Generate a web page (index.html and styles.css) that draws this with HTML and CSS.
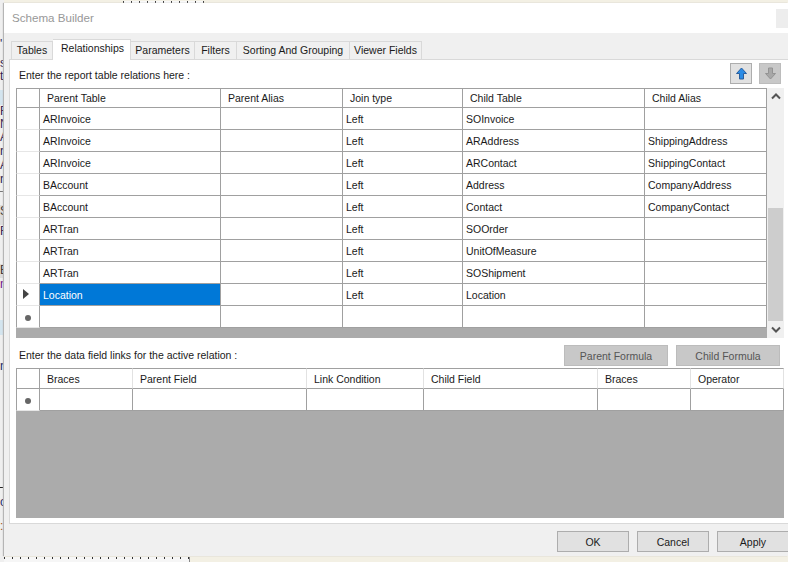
FILE: index.html
```html
<!DOCTYPE html>
<html lang="en">
<head>
<meta charset="utf-8">
<title>Schema Builder</title>
<link rel="stylesheet" href="styles.css">
</head>
<body>
<div class="screen">
  <div class="backdrop-strip">
    <span></span><span>'</span><span>s</span><span>t</span><span class="tint"></span>
    <span>F</span><span>N</span><span>A</span><span>r</span><span>A</span><span>r</span><span class="rule"></span>
    <span class="shade">S</span><span>F</span><span></span><span class="shade">E</span><span class="purple">n</span><span></span>
    <span class="tint"></span><span></span><span class="navy">r</span><span></span><span class="rule-dark"></span><span class="navy">c</span><span class="rust">:</span><span></span>
  </div>
  <div class="backdrop-top"></div>
  <div class="backdrop-bottom"></div>

  <section class="dialog">
    <header class="titlebar">
      <h1 class="title">Schema Builder</h1>
      <span class="close"></span>
    </header>

    <nav class="tabs">
      <span class="tab tab-tables">Tables</span>
      <span class="tab tab-active">Relationships</span>
      <span class="tab tab-parameters">Parameters</span>
      <span class="tab tab-filters">Filters</span>
      <span class="tab tab-sorting">Sorting And Grouping</span>
      <span class="tab tab-viewer">Viewer Fields</span>
    </nav>

    <main class="page">
      <div class="toolbar">
        <span class="label label-top">Enter the report table relations here :</span>
        <div class="arrows">
          <button class="arrow">
            <svg width="11" height="13" viewBox="0 0 11 13"><path d="M5.500 1 L10.500 6.500 H7.500 V12 H3.500 V6.500 H0.500 Z" fill="#2b8ce6" stroke="#2a5f9e" stroke-width="1"/></svg>
          </button>
          <button class="arrow arrow-off">
            <svg width="11" height="13" viewBox="0 0 11 13"><path d="M5.500 12 L10.500 6.500 H7.500 V1 H3.500 V6.500 H0.500 Z" fill="#a8a8a8" stroke="#939393" stroke-width="1"/></svg>
          </button>
        </div>
      </div>

      <div class="grid-row">
        <div class="grid-area grid-area-top">
          <table class="grid grid-relations">
            <colgroup>
              <col class="c-rh"><col class="c-r1"><col class="c-r2"><col class="c-r3"><col class="c-r4"><col class="c-r5">
            </colgroup>
            <thead>
              <tr><th class="rh"></th><th>Parent Table</th><th>Parent Alias</th><th>Join type</th><th>Child Table</th><th>Child Alias</th></tr>
            </thead>
            <tbody>
              <tr><td class="rh"></td><td>ARInvoice</td><td></td><td>Left</td><td>SOInvoice</td><td></td></tr>
              <tr><td class="rh"></td><td>ARInvoice</td><td></td><td>Left</td><td>ARAddress</td><td>ShippingAddress</td></tr>
              <tr><td class="rh"></td><td>ARInvoice</td><td></td><td>Left</td><td>ARContact</td><td>ShippingContact</td></tr>
              <tr><td class="rh"></td><td>BAccount</td><td></td><td>Left</td><td>Address</td><td>CompanyAddress</td></tr>
              <tr><td class="rh"></td><td>BAccount</td><td></td><td>Left</td><td>Contact</td><td>CompanyContact</td></tr>
              <tr><td class="rh"></td><td>ARTran</td><td></td><td>Left</td><td>SOOrder</td><td></td></tr>
              <tr><td class="rh"></td><td>ARTran</td><td></td><td>Left</td><td>UnitOfMeasure</td><td></td></tr>
              <tr><td class="rh"></td><td>ARTran</td><td></td><td>Left</td><td>SOShipment</td><td></td></tr>
              <tr><td class="rh"><i class="marker"></i></td><td class="selected">Location</td><td></td><td>Left</td><td>Location</td><td></td></tr>
              <tr><td class="rh"><i class="newrow"></i></td><td></td><td></td><td></td><td></td><td></td></tr>
            </tbody>
          </table>
        </div>
        <div class="scrollbar">
          <span class="sb-btn"><svg width="10" height="7" viewBox="0 0 10 7"><path d="M1 5.500 L5 1.500 L9 5.500" fill="none" stroke="#555" stroke-width="2"/></svg></span>
          <div class="sb-track"><div class="sb-thumb"></div></div>
          <span class="sb-btn"><svg width="10" height="7" viewBox="0 0 10 7"><path d="M1 1.500 L5 5.500 L9 1.500" fill="none" stroke="#555" stroke-width="2"/></svg></span>
        </div>
      </div>

      <div class="toolbar toolbar-links">
        <span class="label">Enter the data field links for the active relation :</span>
        <div class="formula-buttons">
          <button class="btn btn-off">Parent Formula</button>
          <button class="btn btn-off">Child Formula</button>
        </div>
      </div>

      <div class="grid-area grid-area-bottom">
        <table class="grid grid-links">
          <colgroup>
            <col class="c-rh"><col class="c-l1"><col class="c-l2"><col class="c-l3"><col class="c-l4"><col class="c-l5"><col class="c-l6">
          </colgroup>
          <thead>
            <tr><th class="rh"></th><th>Braces</th><th>Parent Field</th><th>Link Condition</th><th>Child Field</th><th>Braces</th><th>Operator</th></tr>
          </thead>
          <tbody>
            <tr><td class="rh"><i class="newrow"></i></td><td></td><td></td><td></td><td></td><td></td><td></td></tr>
          </tbody>
        </table>
      </div>
    </main>

    <footer class="footer">
      <button class="btn btn-foot">OK</button>
      <button class="btn btn-foot">Cancel</button>
      <button class="btn btn-foot btn-apply">Apply</button>
    </footer>
  </section>
</div>
</body>
</html>
```

FILE: styles.css
```css
* { box-sizing: border-box; }
html, body { margin: 0; padding: 0; }
body {
  width: 788px;
  height: 562px;
  overflow: hidden;
  font-family: "Liberation Sans", Arial, sans-serif;
  font-size: 10.5px;
  color: #1a1a1a;
}
.screen {
  position: relative;
  width: 788px;
  height: 562px;
  overflow: hidden;
  background: #f3f0e4;
}

/* Windows behind the dialog */
.backdrop-strip {
  position: absolute;
  left: 0;
  top: 0;
  width: 4px;
  height: 562px;
  background: #efefef;
  overflow: hidden;
  display: grid;
  grid-template-rows: 38px 19px 13px 20px 15px 13px 13px 14px 14px 14px 14px 18px 20px 16px 23px 14px 18px 24px 15px 25px 14px 113px 9px 24px 14px 1fr;
  font-size: 12px;
  line-height: 13px;
  color: #2a2050;
}
.backdrop-strip .tint { background: #d3e4ee; }
.backdrop-strip .rule { border-top: 1px solid #777; align-self: end; margin-bottom: 13px; }
.backdrop-strip .rule-dark { border-top: 1px solid #222; }
.backdrop-strip .shade { background: #dcdcdc; color: #333; }
.backdrop-strip .purple { color: #70108a; }
.backdrop-strip .navy { color: #142a6a; }
.backdrop-strip .rust { color: #a8551a; }
.backdrop-top {
  position: absolute;
  left: 123px;
  top: 1px;
  width: 81px;
  height: 2px;
  background: repeating-linear-gradient(90deg, #444 0 1px, #f8f8f8 1px 8px);
}
.backdrop-bottom {
  position: absolute;
  left: 4px;
  top: 557px;
  width: 186px;
  height: 5px;
  border-right: 1px solid #888;
  background: repeating-linear-gradient(90deg, #333 0 1px, #f6f6f6 1px 8px) top / 100% 2px no-repeat #f6f6f6;
}

/* Dialog window */
.dialog {
  position: absolute;
  left: 4px;
  top: 3px;
  width: 784px;
  height: 553px;
  display: flex;
  flex-direction: column;
  background: #f0f0f0;
  box-shadow: -1px 0 1px #b5b5b5;
}
.titlebar {
  flex: none;
  height: 30px;
  padding-left: 8px;
  background: #fff;
  display: flex;
  align-items: center;
  justify-content: space-between;
}
.title {
  margin: 0 0 1px;
  font-size: 11.6px;
  font-weight: 400;
  color: #989898;
}
.close {
  width: 12px;
  height: 19px;
  background: #ededed;
}

/* Tabs */
.tabs {
  flex: none;
  height: 26px;
  padding-left: 7px;
  display: flex;
  align-items: flex-end;
}
.tab {
  height: 18px;
  padding-top: 2px;
  text-align: center;
  background: #f0f0f0;
  border: 1px solid #d9d9d9;
  border-bottom: 0;
  border-left: 0;
}
.tab-tables { width: 42px; border-left: 1px solid #d9d9d9; }
.tab-active {
  width: 78px;
  height: 21px;
  margin-bottom: -1px;
  padding-top: 2px;
  padding-left: 2px;
  background: #fff;
  position: relative;
}
.tab-parameters { width: 64px; }
.tab-filters { width: 42px; }
.tab-sorting { width: 113px; }
.tab-viewer { width: 72px; }

/* Tab page */
.page {
  flex: 1;
  min-height: 0;
  margin-left: 5px;
  padding: 0 4px 5px 6px;
  background: #fff;
  border-top: 1px solid #d9d9d9;
  border-left: 1px solid #d9d9d9;
  border-bottom: 1px solid #d9d9d9;
  display: flex;
  flex-direction: column;
}
.toolbar {
  flex: none;
  height: 28px;
  display: flex;
  align-items: center;
  justify-content: space-between;
  padding-left: 3px;
}
.toolbar-links { height: 30px; padding-top: 4px; padding-right: 4px; }
.label { color: #1a1a1a; }
.label-top { margin-top: 2px; }
.arrows { display: flex; gap: 7px; margin-right: 3px; margin-top: -1px; }
.arrow {
  width: 22px;
  height: 21px;
  padding: 0;
  display: flex;
  align-items: center;
  justify-content: center;
  background: #e1e1e1;
  border: 1px solid #adadad;
}
.arrow-off { background: #c8c8c8; border-color: #bcbcbc; }

/* Data grids */
.grid-row { flex: none; display: flex; height: 250px; }
.grid-area { background: #ababab; overflow: hidden; }
.grid-area-top { width: 751px; }
.grid-area-bottom { flex: 1; width: 768px; }
.grid {
  table-layout: fixed;
  border-collapse: separate;
  border-spacing: 0;
  width: 100%;
  background: #fff;
  font-size: 10.5px;
}
.grid th, .grid td {
  padding: 0 0 0 3px;
  overflow: hidden;
  white-space: nowrap;
  border-right: 1px solid #a0a0a0;
  border-bottom: 1px solid #a0a0a0;
  font-weight: 400;
  text-align: left;
  vertical-align: middle;
}
.grid th {
  height: 20px;
  padding-left: 7px;
  border-top: 1px solid #a0a0a0;
}
.grid-links th { height: 21px; border-right-color: #e2e2e2; }
.grid td { height: 22px; }
.grid .rh {
  padding: 0;
  text-align: center;
  border-left: 1px solid #a0a0a0;
  border-bottom-color: #e6e6e6;
}
.grid thead .rh { border-bottom-color: #a0a0a0; }
.grid-links thead .rh { border-right-color: #a0a0a0; }
.grid .selected { background: #0078d7; color: #fff; }
.c-rh { width: 24px; }
.c-r1 { width: 181px; }
.c-r2 { width: 122px; }
.c-r3 { width: 120px; }
.c-r4 { width: 182px; }
.c-r5 { width: 122px; }
.c-l1 { width: 93px; }
.c-l2 { width: 174px; }
.c-l3 { width: 117px; }
.c-l4 { width: 174px; }
.c-l5 { width: 93px; }
.c-l6 { width: 93px; }
.marker {
  display: inline-block;
  width: 0;
  height: 0;
  margin-right: 5px;
  border-left: 6px solid #444;
  border-top: 5px solid transparent;
  border-bottom: 5px solid transparent;
}
.newrow {
  display: inline-block;
  width: 6px;
  height: 6px;
  margin-top: 3px;
  border-radius: 50%;
  background: #666;
}

/* Scrollbar */
.scrollbar {
  flex: none;
  width: 17px;
  display: flex;
  flex-direction: column;
  background: #f0f0f0;
}
.sb-btn {
  flex: none;
  height: 17px;
  display: flex;
  align-items: center;
  justify-content: center;
}
.sb-track { flex: 1; padding-top: 103px; padding-left: 1px; padding-right: 1px; }
.sb-thumb { height: 113px; background: #cdcdcd; }

/* Buttons */
.btn {
  width: 104px;
  height: 21px;
  padding: 0;
  font: 10.5px "Liberation Sans", Arial, sans-serif;
  color: #1a1a1a;
  background: #e1e1e1;
  border: 1px solid #adadad;
}
.btn-off { color: #555; background: #c8c8c8; border-color: #bcbcbc; }
.formula-buttons { display: flex; gap: 8px; align-self: flex-start; margin-top: 3px; }
.footer {
  flex: none;
  height: 32px;
  display: flex;
  justify-content: flex-end;
  gap: 8px;
  padding-top: 7px;
}
.btn-foot { width: 72px; margin-left: 0; }
.btn-apply { width: 71px; border-right: 0; }
```
